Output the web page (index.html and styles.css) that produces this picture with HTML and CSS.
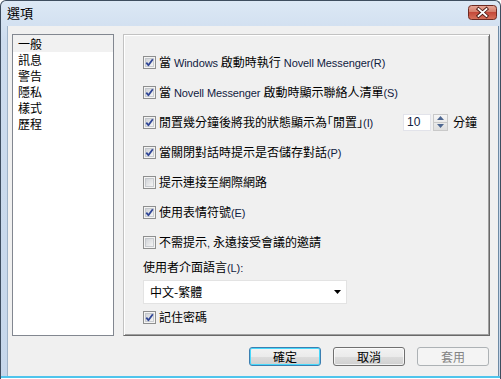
FILE: index.html
```html
<!DOCTYPE html>
<html lang="zh-Hant">
<head>
<meta charset="utf-8">
<title>選項</title>
<link rel="stylesheet" href="styles.css">
</head>
<body>
<svg class="defs" width="0" height="0" aria-hidden="true">
  <defs>
    <linearGradient id="cbfill" x1="0" y1="0" x2="1" y2="1">
      <stop offset="0" stop-color="#cfd2d6"/>
      <stop offset="1" stop-color="#f6f6f6"/>
    </linearGradient>
    <symbol id="box" viewBox="0 0 13 13">
      <rect x="0.5" y="0.5" width="12" height="12" fill="#f4f4f4" stroke="#8e8f8f"/>
      <rect x="2.5" y="2.5" width="8" height="8" fill="url(#cbfill)" stroke="#aeb3b9" stroke-opacity="0.6"/>
    </symbol>
    <symbol id="chk" viewBox="0 0 13 13">
      <use href="#box"/>
      <path d="M3.3 6.6 L5.4 9.2 L9.8 3.2" fill="none" stroke="#2f4596" stroke-width="1.8" stroke-linejoin="round"/>
    </symbol>
  </defs>
</svg>
<div class="window">
  <div class="titlebar">
    <span class="title">選項</span>
    <span class="close">
      <svg width="29" height="15" viewBox="0 0 29 15">
        <defs>
          <linearGradient id="red" x1="0" y1="0" x2="0" y2="1">
            <stop offset="0" stop-color="#e9a99b"/>
            <stop offset="0.45" stop-color="#d57f6c"/>
            <stop offset="0.5" stop-color="#c4493a"/>
            <stop offset="1" stop-color="#d8735c"/>
          </linearGradient>
        </defs>
        <rect x="0.5" y="0.5" width="28" height="14" rx="3" fill="url(#red)" stroke="#6e2a22"/>
        <path d="M10.5 4 L18.5 11 M18.5 4 L10.5 11" stroke="#4a1a14" stroke-width="3.6" stroke-linecap="square"/>
        <path d="M10.5 4 L18.5 11 M18.5 4 L10.5 11" stroke="#ffffff" stroke-width="1.8" stroke-linecap="square"/>
      </svg>
    </span>
  </div>
  <div class="client">
    <div class="main">
      <ul class="list">
        <li class="item selected">一般</li>
        <li class="item">訊息</li>
        <li class="item">警告</li>
        <li class="item">隱私</li>
        <li class="item">樣式</li>
        <li class="item">歷程</li>
      </ul>
      <div class="panel">
        <div class="row"><svg class="cb"><use href="#chk"/></svg><span>當<span class="en"> Windows </span>啟動時執行<span class="en"> Novell Messenger(R)</span></span></div>
        <div class="row"><svg class="cb"><use href="#chk"/></svg><span>當<span class="en"> Novell Messenger </span>啟動時顯示聯絡人清單<span class="en">(S)</span></span></div>
        <div class="row idle"><svg class="cb"><use href="#chk"/></svg><span>閒置幾分鐘後將我的狀態顯示為<span class="halt">「</span>閒置<span class="halt">」</span><span class="en">(I)</span></span>
          <span class="spin">
            <span class="spin-input">10</span>
            <span class="spin-btns">
              <span class="spin-btn"><svg width="7" height="4" viewBox="0 0 7 4"><path d="M0 4 L3.5 0 L7 4Z" fill="#4d6690"/></svg></span>
              <span class="spin-btn"><svg width="7" height="4" viewBox="0 0 7 4"><path d="M0 0 L3.5 4 L7 0Z" fill="#4d6690"/></svg></span>
            </span>
            <span class="unit">分鐘</span>
          </span>
        </div>
        <div class="row"><svg class="cb"><use href="#chk"/></svg><span>當關閉對話時提示是否儲存對話<span class="en">(P)</span></span></div>
        <div class="row"><svg class="cb"><use href="#box"/></svg><span>提示連接至網際網路</span></div>
        <div class="row"><svg class="cb"><use href="#chk"/></svg><span>使用表情符號<span class="en">(E)</span></span></div>
        <div class="row"><svg class="cb"><use href="#box"/></svg><span>不需提示<span class="en">, </span>永遠接受會議的邀請</span></div>
        <div class="label">使用者介面語言<span class="en">(L):</span></div>
        <div class="combo"><span>中文-繁體</span><svg width="7" height="4" viewBox="0 0 7 4"><path d="M0 0 L7 0 L3.5 4Z" fill="#000"/></svg></div>
        <div class="row short"><svg class="cb"><use href="#chk"/></svg><span>記住密碼</span></div>
      </div>
    </div>
    <div class="buttons">
      <span class="btn default">確定</span>
      <span class="btn">取消</span>
      <span class="btn disabled">套用</span>
    </div>
  </div>
  <div class="bottom"></div>
</div>
</body>
</html>
```

FILE: styles.css
```css
html, body {
  margin: 0;
  padding: 0;
  background: #ffffff;
}
.defs {
  position: absolute;
  width: 0;
  height: 0;
}
.window {
  width: 501px;
  height: 379px;
  box-sizing: border-box;
  border-left: 1px solid #3e4d5f;
  border-top: 1px solid #3e4d5f;
  border-right: 1px solid #3e4d5f;
  border-top-left-radius: 6px;
  border-top-right-radius: 6px;
  background: linear-gradient(#dce8f5, #cddcee 40px, #c6d7eb);
  padding: 0 1px 0 6px;
  display: flex;
  flex-direction: column;
  font-family: "Noto Sans CJK TC", "Noto Sans", sans-serif;
  font-size: 12px;
  color: #000;
}
.en {
  font-family: "Liberation Sans", Arial, sans-serif;
  font-size: 11px;
  letter-spacing: -0.1px;
  color: #10203f;
}
.halt {
  font-feature-settings: "halt";
}
.titlebar {
  height: 25px;
  display: flex;
  align-items: flex-start;
  justify-content: space-between;
}
.title {
  font-size: 13px;
  line-height: 16px;
  margin-top: 4px;
}
.close {
  display: block;
  margin-top: 4px;
  margin-right: 2px;
  height: 15px;
}
.close svg { display: block; }
.client {
  height: 350px;
  box-sizing: border-box;
  background: #f0f0f0;
  border-left: 1px solid #9fb3c8;
  border-right: 1px solid #6e8aa4;
  padding: 8px 7px 0 4px;
  display: flex;
  flex-direction: column;
}
.main {
  display: flex;
  gap: 9px;
  height: 302px;
}
.list {
  list-style: none;
  margin: 0;
  padding: 0;
  width: 102px;
  box-sizing: border-box;
  border: 1px solid #828790;
  background: #ffffff;
}
.item {
  height: 16px;
  line-height: 16px;
  padding-left: 5px;
}
.item.selected {
  height: 17px;
  line-height: 17px;
  background: #f1f1f1;
}
.panel {
  width: 367px;
  box-sizing: border-box;
  border: 1px solid;
  border-color: #c2c2c2 #696969 #696969 #c2c2c2;
  box-shadow: inset 1px 1px 0 #ffffff, inset -1px -1px 0 #a0a0a0;
  padding: 12px 12px 0 19px;
  display: flex;
  flex-direction: column;
}
.row {
  height: 30px;
  display: flex;
  align-items: center;
  gap: 3px;
  line-height: 16px;
  white-space: nowrap;
}
.row.short {
  height: 16px;
  margin-top: 5px;
}
.cb {
  width: 13px;
  height: 13px;
  flex: none;
}
.spin {
  margin-left: auto;
  display: flex;
  align-items: center;
}
.spin-input {
  width: 28px;
  height: 17px;
  box-sizing: border-box;
  border: 1px solid #e2e3ea;
  background: #fff;
  padding-left: 3px;
  line-height: 15px;
  font-family: "Liberation Sans", sans-serif;
  font-size: 12px;
  color: #10203f;
}
.spin-btns {
  margin-left: 2px;
  width: 15px;
  height: 17px;
  box-sizing: border-box;
  display: flex;
  flex-direction: column;
  border: 1px solid #c9c9c9;
  background: linear-gradient(#f6f6f6, #dedede);
}
.spin-btn {
  flex: 1;
  display: flex;
  align-items: center;
  justify-content: center;
}
.spin-btn + .spin-btn {
  border-top: 1px solid #c9c9c9;
}
.spin-btn svg { display: block; }
.unit {
  margin-left: 5px;
  line-height: 16px;
}
.label {
  margin-top: 2px;
  line-height: 16px;
}
.combo {
  margin-top: 4px;
  width: 204px;
  height: 24px;
  box-sizing: border-box;
  border: 1px solid #e3e3e3;
  background: #ffffff;
  display: flex;
  align-items: center;
  justify-content: space-between;
  padding: 0 5px 0 6px;
  line-height: 16px;
}
.combo svg { display: block; }
.buttons {
  margin-top: 11px;
  display: flex;
  justify-content: flex-end;
  gap: 12px;
  padding-right: 2px;
}
.btn {
  width: 72px;
  height: 19px;
  box-sizing: border-box;
  border: 1px solid #707070;
  border-radius: 3px;
  background: linear-gradient(#f2f2f2, #ebebeb 50%, #dddddd 50%, #cfcfcf);
  box-shadow: inset 0 0 0 1px rgba(255,255,255,0.7);
  text-align: center;
  line-height: 17px;
  font-size: 12px;
}
.btn.default {
  border-color: #3c7fb1;
  box-shadow: inset 0 0 0 1px #48d8fb;
}
.btn.disabled {
  border-color: #adb2b5;
  background: #f4f4f4;
  color: #838383;
  box-shadow: none;
}
.bottom {
  height: 3px;
  border-top: 2px solid #4fc4ec;
  box-sizing: border-box;
  margin: 0 -1px 0 -6px;
  background: #ffffff;
}
```
